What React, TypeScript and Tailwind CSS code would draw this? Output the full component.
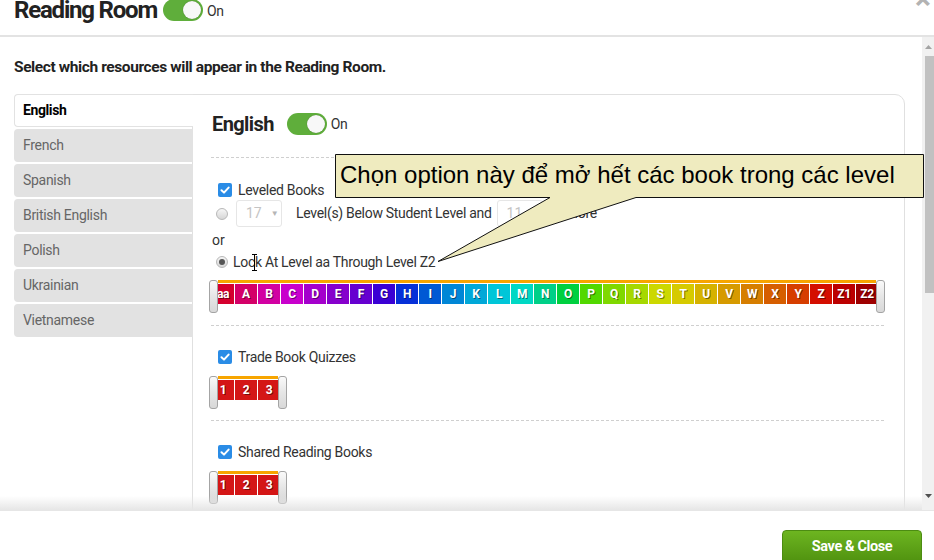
import React from "react";

const levels: [string, string][] = [
  ["aa", "bg-[#d5002e]"],
  ["A", "bg-[#d40068]"],
  ["B", "bg-[#d200a2]"],
  ["C", "bg-[#c800cc]"],
  ["D", "bg-[#a400cc]"],
  ["E", "bg-[#8600cc]"],
  ["F", "bg-[#6600d0]"],
  ["G", "bg-[#3a00d4]"],
  ["H", "bg-[#0630d8]"],
  ["I", "bg-[#0058d4]"],
  ["J", "bg-[#0086d6]"],
  ["K", "bg-[#00a8d8]"],
  ["L", "bg-[#00c6d8]"],
  ["M", "bg-[#00d8c4]"],
  ["N", "bg-[#00d088]"],
  ["O", "bg-[#00d040]"],
  ["P", "bg-[#52d800]"],
  ["Q", "bg-[#80d800]"],
  ["R", "bg-[#a6d800]"],
  ["S", "bg-[#ccd800]"],
  ["T", "bg-[#d6ca00]"],
  ["U", "bg-[#d6b200]"],
  ["V", "bg-[#d69a00]"],
  ["W", "bg-[#d67e00]"],
  ["X", "bg-[#d65e00]"],
  ["Y", "bg-[#d63e00]"],
  ["Z", "bg-[#d40e00]"],
  ["Z1", "bg-[#bc0000]"],
  ["Z2", "bg-[#9e0000]"],
];

const quiz: [string, string][] = [
  ["1", "bg-[#d41616]"],
  ["2", "bg-[#d41616]"],
  ["3", "bg-[#d41616]"],
];

function Toggle() {
  return (
    <div className="relative w-[40px] h-[22px] rounded-full bg-[#5fae3b] flex items-center justify-end pr-[2px]">
      <div className="w-[18px] h-[18px] rounded-full bg-[#f8f8f8] shadow-[0_0_1px_rgba(0,0,0,0.4)]" />
    </div>
  );
}

function Checkbox() {
  return (
    <div className="w-[14px] h-[14px] rounded-[2px] bg-[#2a8ce6] flex items-center justify-center">
      <svg width="10" height="10" viewBox="0 0 10 10">
        <path d="M1.5 5.2 L4 7.6 L8.6 2.6" stroke="white" strokeWidth="2" fill="none" strokeLinecap="round" strokeLinejoin="round" />
      </svg>
    </div>
  );
}

function Radio({ checked }: { checked?: boolean }) {
  return (
    <div className="w-[12px] h-[12px] rounded-full border border-[#b8b8b8] bg-gradient-to-b from-[#f6f6f6] to-[#d6d6d6] flex items-center justify-center">
      {checked && <div className="w-[6px] h-[6px] rounded-full bg-[#555]" />}
    </div>
  );
}

function Select({ value }: { value: string }) {
  return (
    <div className="w-[46px] h-[27px] border border-[#e6e6e6] rounded-[3px] bg-white flex items-center pl-[9px] text-[14px] text-[#c4c4c4]">
      <span>{value}</span>
      <span className="ml-[9px] text-[8px] text-[#b5b5b5]">▼</span>
    </div>
  );
}

function Handle({ side }: { side: "left" | "right" }) {
  return (
    <div
      className={`absolute top-0 ${side === "left" ? "left-0" : "right-0"} w-[9px] h-[33px] rounded-[3px] border border-[#a4a4a4] bg-gradient-to-b from-[#fafafa] via-[#e6e6e6] to-[#d8d8d8]`}
    />
  );
}

function Slider({ items, width }: { items: [string, string][]; width: string }) {
  return (
    <div className={`relative h-[33px] -ml-[2px] ${width}`}>
      <div className="mx-[9px] mt-[2px] h-[3px] bg-[#f7a500]" />
      <div className="flex ml-[3px] mt-px">
        {items.map(([label, cls]) => (
          <div
            key={label}
            className={`${cls} w-[22px] h-[20px] mr-px flex items-center justify-center text-white font-bold text-[12px] tracking-[-0.3px] [text-shadow:1px_1px_0_rgba(0,0,0,0.45)]`}
          >
            {label}
          </div>
        ))}
      </div>
      <Handle side="left" />
      <Handle side="right" />
    </div>
  );
}

function Dashed() {
  return <div className="h-px bg-[repeating-linear-gradient(to_right,#cfcfcf_0_3px,transparent_3px_5px)]" />;
}

const tabs = ["French", "Spanish", "British English", "Polish", "Ukrainian", "Vietnamese"];

export default function App() {
  return (
    <div className="relative w-[934px] h-[560px] overflow-hidden bg-white text-[#333] font-['Roboto','Liberation_Sans',sans-serif]">
      {/* Header */}
      <div className="h-[37px] border-b-2 border-[#e3e3e3] flex items-start pl-[14px]">
        <h1 className="-mt-[3px] text-[24px] leading-[26px] font-bold tracking-[-1.2px] text-[#222]">Reading Room</h1>
        <div className="ml-[6px] -mt-[1px]">
          <Toggle />
        </div>
        <span className="ml-[4px] mt-[1px] text-[14px] leading-[20px] tracking-[-0.4px] text-[#333]">On</span>
      </div>

      {/* Body */}
      <div className="flex h-[473px]">
        <div className="relative flex-1 overflow-hidden pl-[14px] pr-[17px]">
          <p className="pt-[20px] text-[15.5px] leading-[20px] font-bold tracking-[-0.4px] text-[#222]">
            Select which resources will appear in the Reading Room.
          </p>
          <div className="flex mt-[17px]">
            {/* Tabs */}
            <div className="w-[179px] -mr-px relative z-10 flex flex-col gap-[2px]">
              <div className="h-[33px] bg-white border border-r-0 border-[#e2e2e2] rounded-l-[4px] flex items-center pl-[8px] text-[14px] font-bold tracking-[-0.4px] text-black">
                English
              </div>
              {tabs.map((t) => (
                <div
                  key={t}
                  className="h-[33px] bg-[#e2e2e2] rounded-l-[4px] flex items-center pl-[9px] text-[14px] tracking-[-0.3px] text-[#666]"
                >
                  {t}
                </div>
              ))}
            </div>

            {/* Panel */}
            <div className="flex-1 h-[460px] border border-[#e0e0e0] rounded-tr-[10px] pl-[18px] pr-[19px]">
              <div className="mt-[18px] h-[22px] flex items-center">
                <span className="ml-px text-[20px] font-bold tracking-[-0.6px] text-[#222]">English</span>
                <div className="ml-[13px]">
                  <Toggle />
                </div>
                <span className="ml-[4px] text-[14px] tracking-[-0.4px]">On</span>
              </div>
              <div className="mt-[22px]">
                <Dashed />
              </div>

              <div className="mt-[22px] h-[20px] flex items-center pl-[7px]">
                <Checkbox />
                <span className="ml-[6px] text-[14px] tracking-[-0.3px]">Leveled Books</span>
              </div>
              <div className="h-[27px] flex items-center pl-[5px]">
                <Radio />
                <div className="ml-[8px]">
                  <Select value="17" />
                </div>
                <span className="ml-[14px] text-[14px] tracking-[-0.3px]">Level(s) Below Student Level and</span>
                <div className="ml-[5px]">
                  <Select value="11" />
                </div>
                <span className="ml-[8px] text-[14px] tracking-[-0.3px]">or More</span>
              </div>
              <div className="mt-[3px] h-[20px] flex items-center pl-px text-[14px]">or</div>
              <div className="mt-[2px] h-[20px] flex items-center pl-[5px]">
                <Radio checked />
                <span className="ml-[5px] text-[14px] tracking-[-0.3px]">Lock At Level aa Through Level Z2</span>
              </div>
              <div className="mt-[8px]">
                <Slider items={levels} width="w-[676px]" />
              </div>
              <div className="mt-[12px]">
                <Dashed />
              </div>

              <div className="mt-[21px] h-[20px] flex items-center pl-[7px]">
                <Checkbox />
                <span className="ml-[6px] text-[14px] tracking-[-0.3px]">Trade Book Quizzes</span>
              </div>
              <div className="mt-[9px]">
                <Slider items={quiz} width="w-[78px]" />
              </div>
              <div className="mt-[11px]">
                <Dashed />
              </div>

              <div className="mt-[21px] h-[20px] flex items-center pl-[7px]">
                <Checkbox />
                <span className="ml-[6px] text-[14px] tracking-[-0.3px]">Shared Reading Books</span>
              </div>
              <div className="mt-[9px]">
                <Slider items={quiz} width="w-[78px]" />
              </div>
            </div>
          </div>
          {/* bottom fade */}
          <div className="absolute left-0 right-0 bottom-0 h-[14px] bg-gradient-to-b from-[rgba(235,235,235,0)] to-[#e6e6e6]" />
        </div>

        {/* Scrollbar */}
        <div className="w-[12px] bg-[#f1f1f1] flex flex-col">
          <div className="h-[19px] flex items-center justify-end pr-[2px]">
            <svg width="7" height="4" viewBox="0 0 7 4">
              <path d="M0 4 L3.5 0 L7 4 Z" fill="#a3a3a3" />
            </svg>
          </div>
          <div className="ml-[3px] h-[237px] bg-[#c1c1c1]" />
          <div className="flex-1" />
          <div className="h-[16px] flex items-start justify-end pr-[2px]">
            <svg width="7" height="4" viewBox="0 0 7 4">
              <path d="M0 0 L7 0 L3.5 4 Z" fill="#505050" />
            </svg>
          </div>
        </div>
      </div>

      {/* Footer */}
      <div className="h-[50px] border-t border-[#e6e6e6] flex justify-end pr-[12px] pt-[19px]">
        <button className="w-[140px] h-[34px] rounded-[4px] border border-[#4c8c12] bg-gradient-to-b from-[#6db520] to-[#4f910f] text-white font-bold text-[14.5px] tracking-[-0.4px] flex items-start justify-center pt-[5px]">
          Save &amp; Close
        </button>
      </div>

      {/* Close × */}
      <div className="absolute right-[3px] -top-[16px] text-[30px] leading-[30px] font-bold text-[#b3b3b3]">×</div>

      {/* Callout */}
      <svg className="absolute left-[334px] top-[153px]" width="592" height="112" viewBox="0 0 592 112">
        <path
          d="M1.5 1.5 H589.5 V44.5 H302 L104 108.5 L216 44.5 H1.5 Z"
          fill="#efebbf"
          stroke="#111"
          strokeWidth="1"
        />
      </svg>
      <div className="absolute left-[340px] top-[161px] text-[24px] leading-[28px] text-black font-['Liberation_Sans','Arial',sans-serif] whitespace-nowrap">
        Chọn option này để mở hết các book trong các level
      </div>

      {/* Text cursor */}
      <svg className="absolute left-[251px] top-[254px]" width="7" height="17" viewBox="0 0 7 17">
        <path d="M1 0.5 H6 M1 16.5 H6 M3.5 0.5 V16.5" stroke="#000" strokeWidth="1" fill="none" />
      </svg>
    </div>
  );
}
